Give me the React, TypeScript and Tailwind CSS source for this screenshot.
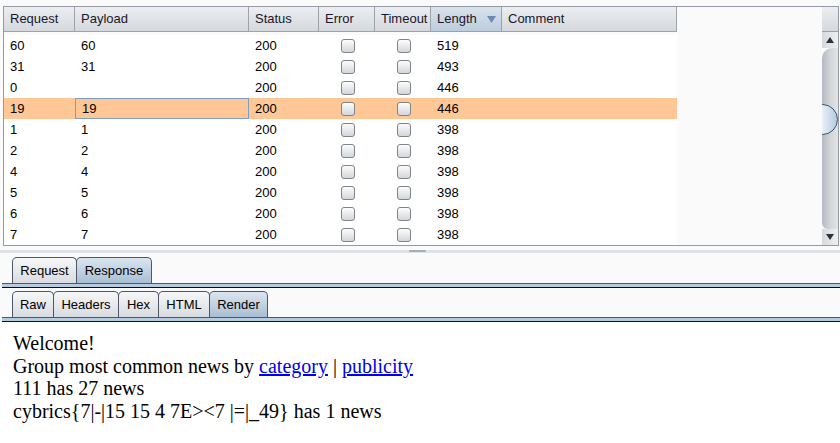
import React from 'react';

const COLS = [
  { key: 'request', label: 'Request', w: 'w-[71px]' },
  { key: 'payload', label: 'Payload', w: 'w-[174px]' },
  { key: 'status', label: 'Status', w: 'w-[70px]' },
  { key: 'error', label: 'Error', w: 'w-[56px]' },
  { key: 'timeout', label: 'Timeout', w: 'w-[56px]' },
  { key: 'length', label: 'Length', w: 'w-[71px]' },
  { key: 'comment', label: 'Comment', w: 'w-[175px]' },
];

const ROWS = [
  { request: '60', payload: '60', status: '200', length: '519' },
  { request: '31', payload: '31', status: '200', length: '493' },
  { request: '0', payload: '', status: '200', length: '446' },
  { request: '19', payload: '19', status: '200', length: '446', selected: true },
  { request: '1', payload: '1', status: '200', length: '398' },
  { request: '2', payload: '2', status: '200', length: '398' },
  { request: '4', payload: '4', status: '200', length: '398' },
  { request: '5', payload: '5', status: '200', length: '398' },
  { request: '6', payload: '6', status: '200', length: '398' },
  { request: '7', payload: '7', status: '200', length: '398' },
];

const Checkbox: React.FC = () => (
  <span className="block w-[14px] h-[14px] rounded-[3px] border border-[#7f848c] bg-gradient-to-b from-[#fdfdfd] to-[#d3d6db]" />
);

type TabDef = { label: string; w: string };

const Tab: React.FC<{ tab: TabDef; active?: boolean; first?: boolean }> = ({ tab, active, first }) => (
  <div
    className={`${tab.w} h-[26px] flex items-center justify-center border border-b-0 border-[#50566a] rounded-t-[5px] ${first ? '' : '-ml-px'} ${
      active ? 'bg-gradient-to-b from-[#dbe5ef] to-[#a9bfd5]' : 'bg-gradient-to-b from-[#f6f7f8] to-[#d8dbe0]'
    }`}
  >
    {tab.label}
  </div>
);

const TabStrip: React.FC<{ tabs: TabDef[]; active: string }> = ({ tabs, active }) => (
  <div>
    <div className="flex pl-[12px] items-end">
      {tabs.map((t, i) => (
        <Tab key={t.label} tab={t} active={t.label === active} first={i === 0} />
      ))}
    </div>
    <div className="ml-[2px] h-[4px] bg-[#b7cbe0] border-t border-[#50566a]" />
    <div className="ml-[2px] h-[1px] bg-[#0b0b1a]" />
  </div>
);

const MAIN_TABS: TabDef[] = [
  { label: 'Request', w: 'w-[65px]' },
  { label: 'Response', w: 'w-[76px]' },
];

const VIEW_TABS: TabDef[] = [
  { label: 'Raw', w: 'w-[42px]' },
  { label: 'Headers', w: 'w-[66px]' },
  { label: 'Hex', w: 'w-[41px]' },
  { label: 'HTML', w: 'w-[52px]' },
  { label: 'Render', w: 'w-[59px]' },
];

export default function App() {
  return (
    <div className="w-[840px] h-[443px] bg-[#fafafa] overflow-hidden flex flex-col font-['Liberation_Sans',Arial,sans-serif] text-[13px] text-black">
      {/* Intruder results table */}
      <div className="pt-[6px] pl-[3px] pr-[1px]">
        <div className="h-[240px] border border-[#969aa3] flex">
          <div className="flex-1 flex flex-col">
            <div className="flex h-[25px]">
              {COLS.map((c) => (
                <div
                  key={c.key}
                  className={`${c.w} shrink-0 h-full flex items-center pl-[6px] border-r border-b border-[#9ea2aa] text-[#17172e] ${
                    c.key === 'length'
                      ? 'bg-gradient-to-b from-[#d9e3ed] to-[#bccddd] justify-between pr-[5px]'
                      : 'bg-gradient-to-b from-[#eceef0] to-[#d5d8dd]'
                  }`}
                >
                  <span>{c.label}</span>
                  {c.key === 'length' && (
                    <svg width="9" height="7" viewBox="0 0 9 7">
                      <path d="M0 0 H9 L4.5 7 Z" fill="#6d8bb0" />
                    </svg>
                  )}
                </div>
              ))}
            </div>
            <div className="pt-[3px] overflow-hidden">
              {ROWS.map((r) => (
                <div key={r.request} className={`flex h-[21px] w-[673px] ${r.selected ? 'bg-[#ffc796]' : 'bg-white'}`}>
                  <div className="w-[71px] pl-[6px] flex items-center">{r.request}</div>
                  <div
                    className={`w-[174px] pl-[6px] flex items-center ${
                      r.selected ? 'border border-[#7d9fc6] pl-[5px]' : ''
                    }`}
                  >
                    {r.payload}
                  </div>
                  <div className="w-[70px] pl-[6px] flex items-center">{r.status}</div>
                  <div className="w-[56px] flex items-center justify-center pl-[2px]">
                    <Checkbox />
                  </div>
                  <div className="w-[56px] flex items-center justify-center pl-[2px]">
                    <Checkbox />
                  </div>
                  <div className="w-[71px] pl-[6px] flex items-center">{r.length}</div>
                  <div className="w-[175px]" />
                </div>
              ))}
            </div>
          </div>
          {/* scrollbar */}
          <div className="w-[16px] flex flex-col">
            <div className="h-[25px] border-b border-[#9ea2aa] bg-gradient-to-b from-[#eceef0] to-[#d5d8dd]" />
            <div className="h-[16px] flex items-center justify-center bg-gradient-to-r from-[#d6d8dc] to-[#eef0f2]">
              <svg width="8" height="6" viewBox="0 0 8 6">
                <path d="M4 0 L8 6 H0 Z" fill="#2e323a" />
              </svg>
            </div>
            <div className="flex-1 flex flex-col bg-gradient-to-r from-[#b6b9c0] via-[#d2d4d9] to-[#e2e4e7] rounded-tl-[10px] rounded-bl-[6px] overflow-hidden">
              <div className="h-[56px]" />
              <div className="h-[31px] w-[16px] overflow-hidden">
                <div className="h-[31px] w-[31px] -ml-[15px] rounded-full border border-[#3c5470] bg-gradient-to-r from-[#ffffff] via-[#e8eff6] to-[#b4cbe0]" />
              </div>
              <div className="flex-1" />
            </div>
            <div className="h-[16px] flex items-center justify-center bg-gradient-to-r from-[#d6d8dc] to-[#eef0f2]">
              <svg width="8" height="6" viewBox="0 0 8 6">
                <path d="M0 0 H8 L4 6 Z" fill="#2e323a" />
              </svg>
            </div>
          </div>
        </div>
      </div>

      {/* split divider */}
      <div className="h-[11px] flex flex-col justify-center">
        <div className="h-[3px] bg-[#dfe2e6] flex justify-center">
          <div className="h-[2px] w-[17px] bg-[#a9aeb6] ml-[-6px] rounded-b-[1px]" />
        </div>
      </div>

      <TabStrip tabs={MAIN_TABS} active="Response" />
      <div className="h-[3px]" />
      <TabStrip tabs={VIEW_TABS} active="Render" />

      {/* rendered response */}
      <div className="flex-1 bg-white pl-[13px] pt-[10px] font-['Liberation_Serif','Times_New_Roman',serif] text-[20px] leading-[22.7px]">
        <div>Welcome!</div>
        <div>
          Group most common news by <a className="text-[#0000ee] underline">category</a> |{' '}
          <a className="text-[#0000ee] underline">publicity</a>
        </div>
        <div>111 has 27 news</div>
        <div>cybrics{'{'}7|-|15 15 4 7E&gt;&lt;7 |=|_49{'}'} has 1 news</div>
      </div>
    </div>
  );
}
